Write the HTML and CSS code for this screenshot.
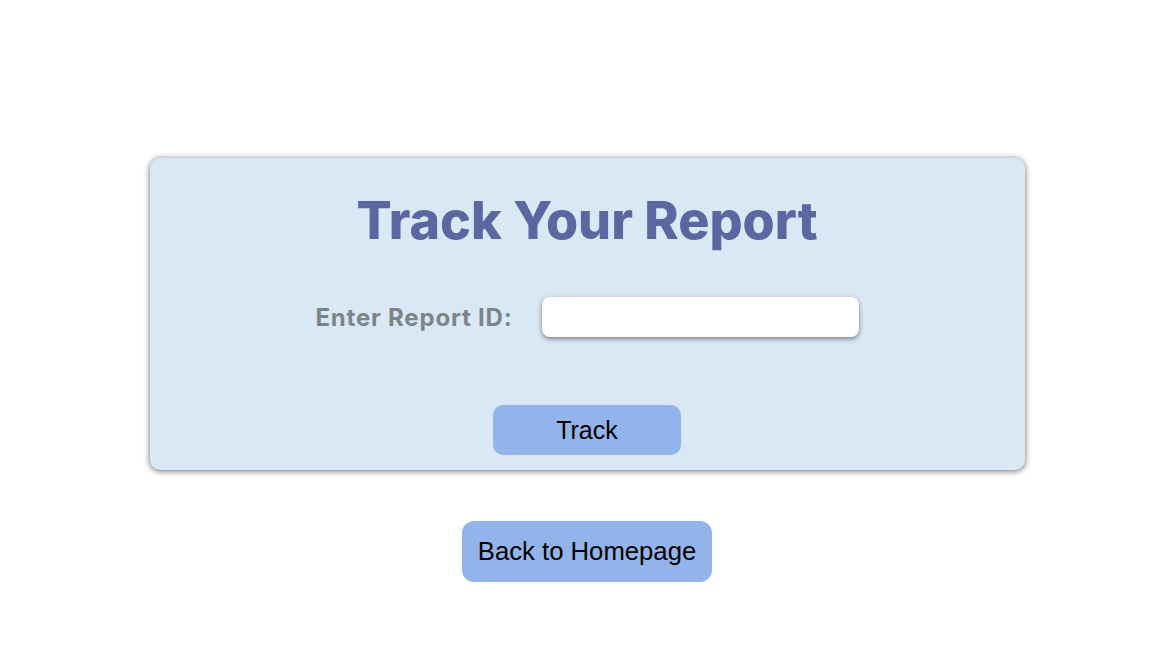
FILE: index.html
```html
<!DOCTYPE html>
<html>
<head>
<meta charset="utf-8">
<link rel="stylesheet" href="styles.css">
</head>
<body>
<main class="page">
  <section class="card">
    <h1 class="title">Track Your Report</h1>
    <div class="field">
      <label class="label" for="rid">Enter Report ID:</label>
      <input class="input" id="rid" type="text">
    </div>
    <button class="btn btn-track">Track</button>
  </section>
  <button class="btn btn-back">Back to Homepage</button>
</main>
</body>
</html>
```
FILE: styles.css
```css
html, body {
  margin: 0;
  padding: 0;
  background: #ffffff;
}
.page {
  width: 1157px;
  box-sizing: border-box;
  padding: 158px 0 0 17px;
  display: flex;
  flex-direction: column;
  align-items: center;
}
.card {
  width: 875px;
  height: 312px;
  box-sizing: border-box;
  background: #dae8f5;
  border-radius: 10px;
  box-shadow: 0 1px 6px rgba(0,0,0,0.6);
  display: flex;
  flex-direction: column;
  align-items: center;
  padding-top: 34px;
}
.title {
  margin: 0;
  font-family: Inter, "Open Sans", sans-serif;
  font-weight: 800;
  font-size: 52px;
  color: #5a67a0;
  line-height: 58px;
}
.field {
  margin-top: 47px;
  display: flex;
  align-items: center;
  gap: 29px;
}
.label {
  font-family: Inter, sans-serif;
  font-weight: 700;
  font-size: 24px;
  letter-spacing: 0.8px;
  color: #7d8488;
}
.input {
  width: 317px;
  height: 40px;
  box-sizing: border-box;
  border: none;
  border-radius: 8px;
  background: #fff;
  box-shadow: 0 2px 5px rgba(0,0,0,0.45);
  outline: none;
}
.btn {
  border: none;
  padding: 0;
  font-family: "Liberation Sans", Arial, sans-serif;
  color: #000;
  background: #93b4ea;
  font-size: 25px;
}
.btn-track {
  margin-top: 68px;
  width: 188px;
  height: 50px;
  border-radius: 10px;
}
.btn-back {
  margin-top: 51px;
  width: 250px;
  height: 61px;
  border-radius: 12px;
  font-size: 25.7px;
}
```
